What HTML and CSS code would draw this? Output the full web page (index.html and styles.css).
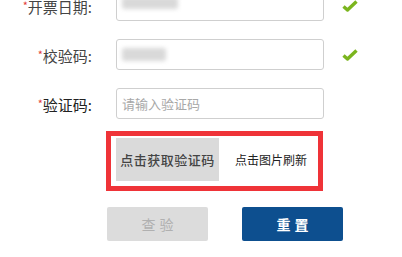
FILE: index.html
```html
<!DOCTYPE html>
<html lang="zh-CN">
<head>
<meta charset="utf-8">
<link rel="stylesheet" href="styles.css">
</head>
<body>
<div class="form">
  <div class="row">
    <label class="label"><span class="star">*</span>开票日期:</label>
    <div class="input"><span class="blur blur-a"></span></div>
    <svg class="check" width="16" height="12" viewBox="0 0 16 12"><path d="M1.5 6.5 L5.5 10 L14.5 1.5" fill="none" stroke="#7bb51e" stroke-width="3.4" stroke-linejoin="round"/></svg>
  </div>
  <div class="row">
    <label class="label"><span class="star">*</span>校验码:</label>
    <div class="input"><span class="blur blur-b"></span></div>
    <svg class="check" width="16" height="12" viewBox="0 0 16 12"><path d="M1.5 6.5 L5.5 10 L14.5 1.5" fill="none" stroke="#7bb51e" stroke-width="3.4" stroke-linejoin="round"/></svg>
  </div>
  <div class="row">
    <label class="label dark"><span class="star">*</span>验证码:</label>
    <div class="input"><span class="placeholder">请输入验证码</span></div>
  </div>
  <div class="captcha-box">
    <div class="captcha-img">点击获取验证码</div>
    <span class="refresh">点击图片刷新</span>
  </div>
  <div class="buttons">
    <button class="btn btn-disabled">查验</button>
    <button class="btn btn-primary">重置</button>
  </div>
</div>
</body>
</html>
```
FILE: styles.css
```css
html, body {
  margin: 0;
  padding: 0;
  background: #fff;
}
body {
  font-family: "Noto Sans CJK SC", "Noto Sans", sans-serif;
  width: 402px;
  height: 257px;
  overflow: hidden;
}
.form {
  margin-top: -10px;
  display: flex;
  flex-direction: column;
}
.row {
  display: flex;
  align-items: center;
  height: 31px;
  margin-bottom: 18px;
}
.label {
  width: 92px;
  text-align: right;
  font-size: 15px;
  color: #444;
  margin-right: 24px;
  line-height: 20px;
}
.label.dark {
  color: #222;
}
.star {
  color: #e23a3a;
  font-size: 11px;
  vertical-align: 3px;
}
.input {
  width: 208px;
  height: 31px;
  box-sizing: border-box;
  border: 1px solid #cfcfcf;
  border-radius: 3px;
  display: flex;
  align-items: center;
  padding-left: 5px;
}
.blur {
  display: block;
  background: #d9d9d9;
  filter: blur(2px);
  border-radius: 2px;
}
.blur-a {
  width: 56px;
  height: 12px;
  margin-top: -6px;
}
.blur-b {
  width: 44px;
  height: 13px;
}
.placeholder {
  font-size: 13px;
  color: #a8a8a8;
}
.check {
  margin-left: 18px;
}
.captcha-box {
  margin-left: 106px;
  margin-top: -6px;
  width: 217px;
  height: 60px;
  box-sizing: border-box;
  border: 5px solid #ef3338;
  display: flex;
  align-items: flex-start;
  padding: 2px 0 0 5px;
}
.captcha-img {
  width: 103px;
  height: 43px;
  background: #dadada;
  display: flex;
  align-items: center;
  justify-content: center;
  font-size: 13px;
  font-weight: 500;
  color: #444;
  letter-spacing: 0.5px;
}
.refresh {
  margin-left: 16px;
  font-size: 12px;
  color: #222;
  line-height: 43px;
}
.buttons {
  display: flex;
  margin-left: 107px;
  margin-top: 16px;
  gap: 34px;
}
.btn {
  width: 101px;
  height: 34px;
  border: none;
  border-radius: 2px;
  font-family: "Noto Sans CJK SC", sans-serif;
  font-size: 14px;
  letter-spacing: 4px;
  text-indent: 4px;
  padding: 0;
}
.btn-disabled {
  background: #dcdcdc;
  color: #b0b0b0;
}
.btn-primary {
  background: #0d4f8f;
  color: #fff;
  font-weight: 700;
}
```
